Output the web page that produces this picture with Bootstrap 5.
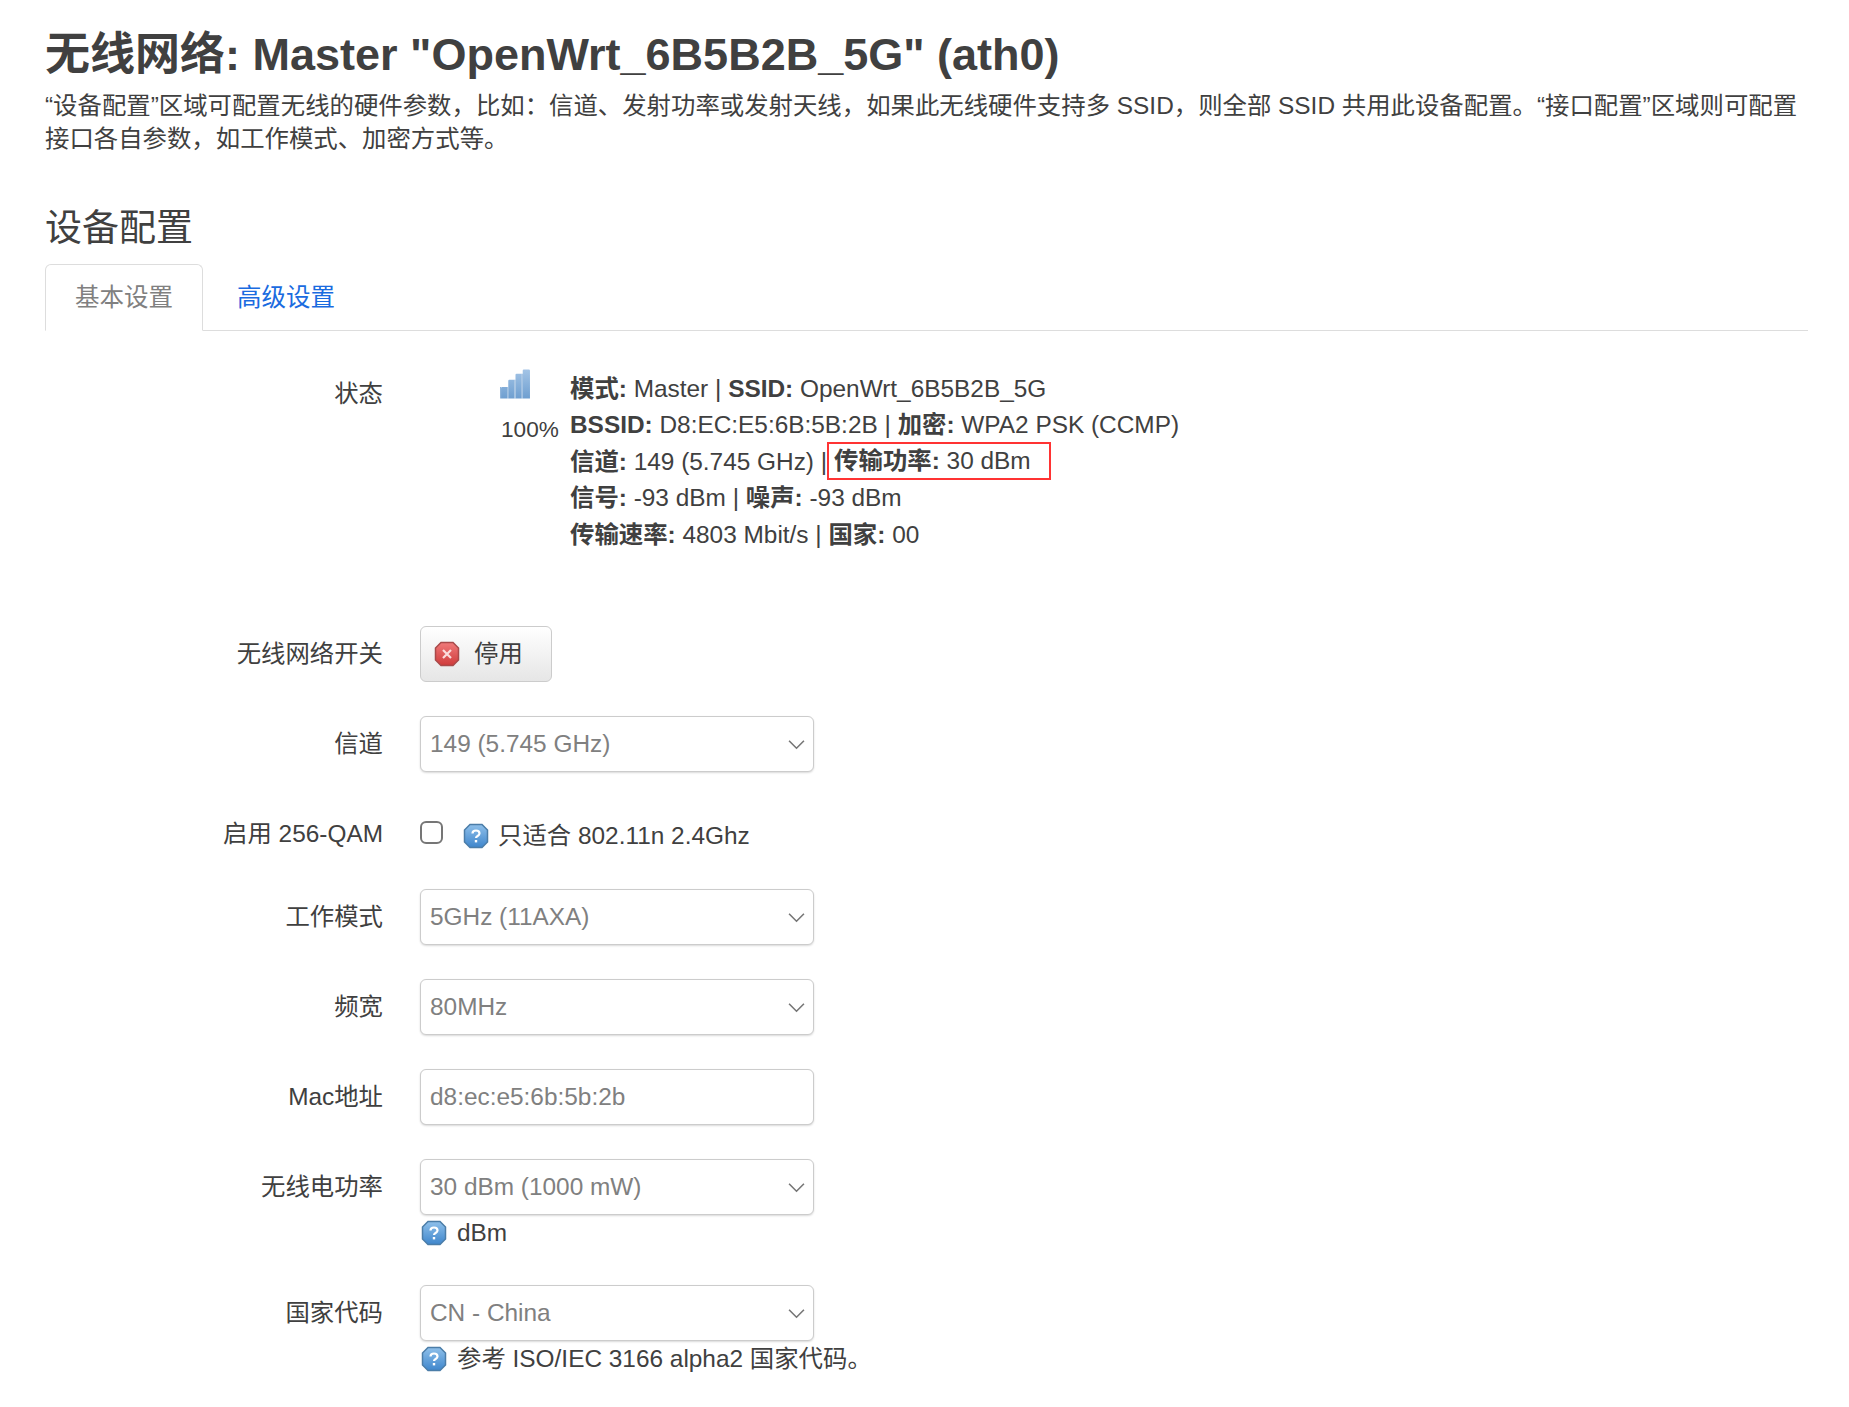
<!DOCTYPE html>
<html lang="zh-CN">
<head>
    <meta charset="UTF-8">
    <meta name="viewport" content="width=device-width, initial-scale=1.0">
    <title>无线网络</title>
    <link href="https://cdn.jsdelivr.net/npm/bootstrap@5.3.0/dist/css/bootstrap.min.css" rel="stylesheet">
    <style>
        body { font-family: "Liberation Sans", "Noto Sans CJK SC", sans-serif; font-size: 24.4px; line-height: 36px; color: #404040; background: #fff; }
        .page-wrap { padding: 27px 41px 0 45px; }
        .page-title { font-size: 45px; line-height: 56px; font-weight: 700; margin: 0 0 6px; color: #404040; }
        .page-desc { font-size: 24.4px; line-height: 33px; margin: 0 0 49px; }
        .sect-title { font-size: 37px; line-height: 50px; font-weight: 400; margin: 0 0 10px; color: #404040; }
        .tab-bar { border-bottom: 1px solid #ddd; height: 67px; }
        .tab-bar .nav-link { font-size: 24.5px; line-height: 36px; padding: 16px 29px 14px 34px; height: 67px; color: #1a6be0; border: 0; background: none; }
        .tab-bar .nav-link.active { color: #808080; border: 1px solid #ddd; border-bottom-color: #fff; border-radius: 6px 6px 0 0; padding: 15px 29px 15px; }
        .opt-label { width: 338px; flex: none; text-align: right; margin-right: 37px; }
        .opt-label-sel { padding-top: 10px; }
        .opt-row { min-height: 56px; margin-bottom: 34px; }
        .opt-row-tight { margin-bottom: 27px; }
        .status-row { padding-top: 40px; margin-bottom: 73px; line-height: 36.4px; }
        .status-row .opt-label { padding-top: 5px; }
        .status-icon { width: 59px; margin: 0 10px 0 81px; flex: none; }
        .status-icon svg { display: block; margin: -2px 0 13px -1px; }
        .signal-pct { font-size: 22.6px; }
        .hl-box { display: inline-block; border: 2px solid #f33; padding: 0 18px 0 5px; margin: -2px 0; line-height: 34px; vertical-align: top; }
        .opt-field { width: 394px; height: 56px; font-size: 24.4px; line-height: 34px; color: #808080; border-color: #ccc; border-radius: 6px; padding: 10px 40px 10px 9px; box-shadow: 0 1px 2px rgba(0,0,0,.15); }
        select.opt-field { background-image: url("data:image/svg+xml,%3csvg xmlns='http://www.w3.org/2000/svg' viewBox='0 0 16 16'%3e%3cpath fill='none' stroke='%23777' stroke-width='1.500' d='M1 4.500l7 7 7-7'/%3e%3c/svg%3e"); background-position: right 8px center; background-size: 17px 17px; }
        .off-btn { height: 56px; width: 132px; font-size: 24.4px; color: #404040; border: 1px solid #ccc; border-radius: 6px; padding: 0 0 0 13px; background: linear-gradient(#fff, #e6e6e6); display: flex; align-items: center; gap: 14px; }
        .chk-box { width: 23px; height: 23px; margin: -4px 20px 0 0; border: 2px solid #767676; border-radius: 4px; flex: none; }
        .qam-note { margin-top: 3px; }
        .qam-ico { margin-right: 9px; }
        .help-line { height: 36px; gap: 10px; padding-left: 1px; }
        .help-ico { flex: none; }
    </style>
</head>
<body>

<svg width="0" height="0" class="position-absolute">
    <defs>
        <linearGradient id="blueFill" x1="0" y1="0" x2="0" y2="1">
            <stop offset="0" stop-color="#8fc0ea"/>
            <stop offset="1" stop-color="#3f86cc"/>
        </linearGradient>
        <linearGradient id="redFill" x1="0" y1="0" x2="0" y2="1">
            <stop offset="0" stop-color="#f07a7a"/>
            <stop offset="1" stop-color="#cf3b3b"/>
        </linearGradient>
        <linearGradient id="barFill" x1="0" y1="0" x2="0" y2="1">
            <stop offset="0" stop-color="#a3c4e6"/>
            <stop offset="1" stop-color="#6f9fd0"/>
        </linearGradient>
        <symbol id="icoHelp" viewBox="0 0 26 26">
            <path d="M7 1.500h12l5.500 5.500v12l-5.500 5.500h-12l-5.500-5.500v-12z" fill="url(#blueFill)" stroke="#4b7da8" stroke-width="1.500"/>
            <path d="M9.500 10.500c0-2 1.500-3 3.500-3s3.500 1 3.500 3c0 2.500-3.500 2.500-3.500 4.500" fill="none" stroke="#fff" stroke-width="2.200"/>
            <path d="M11.800 17h2.400v2.400h-2.400z" fill="#fff"/>
        </symbol>
        <symbol id="icoStop" viewBox="0 0 26 26">
            <path d="M7 1.500h12l5.500 5.500v12l-5.500 5.500h-12l-5.500-5.500v-12z" fill="url(#redFill)" stroke="#a94a4a" stroke-width="1.500"/>
            <path d="M9 9l8 8M17 9l-8 8" stroke="#fbdcdc" stroke-width="2.200"/>
        </symbol>
    </defs>
</svg>

<div class="page-wrap">
    <h1 class="page-title">无线网络: Master "OpenWrt_6B5B2B_5G" (ath0)</h1>
    <p class="page-desc">“设备配置”区域可配置无线的硬件参数，比如：信道、发射功率或发射天线，如果此无线硬件支持多 SSID，则全部 SSID 共用此设备配置。“接口配置”区域则可配置接口各自参数，如工作模式、加密方式等。</p>

    <h2 class="sect-title">设备配置</h2>
    <ul class="nav tab-bar">
        <li class="nav-item"><a class="nav-link active" href="#">基本设置</a></li>
        <li class="nav-item"><a class="nav-link" href="#">高级设置</a></li>
    </ul>

    <div class="d-flex status-row">
        <div class="opt-label">状态</div>
        <div class="status-icon">
            <svg width="31" height="30" viewBox="0 0 30 28">
                <path d="M1 18q0-1 1-1h5v11h-6zM8 11q0-1 1-1h5v18h-6zM15 5q0-1 1-1h5v24h-6zM22 1q0-1 1-1h5q1 0 1 1v27h-7z" fill="url(#barFill)"/>
                <path d="M0 17h1v11h-1zM7 17h1v11h-1zM14 10h1v18h-1zM21 4h1v24h-1z" fill="#8fb4da"/>
            </svg>
            <div class="signal-pct">100%</div>
        </div>
        <div>
            <div><b>模式:</b> Master | <b>SSID:</b> OpenWrt_6B5B2B_5G</div>
            <div><b>BSSID:</b> D8:EC:E5:6B:5B:2B | <b>加密:</b> WPA2 PSK (CCMP)</div>
            <div><b>信道:</b> 149 (5.745 GHz) |<span class="hl-box"><b>传输功率:</b> 30 dBm</span></div>
            <div><b>信号:</b> -93 dBm | <b>噪声:</b> -93 dBm</div>
            <div><b>传输速率:</b> 4803 Mbit/s | <b>国家:</b> 00</div>
        </div>
    </div>

    <div class="d-flex align-items-center opt-row">
        <div class="opt-label">无线网络开关</div>
        <button type="button" class="btn off-btn">
            <svg width="26" height="26" class="help-ico"><use href="#icoStop"/></svg>
            <span>停用</span>
        </button>
    </div>

    <div class="d-flex align-items-center opt-row">
        <div class="opt-label">信道</div>
        <select class="form-select opt-field"><option>149 (5.745 GHz)</option></select>
    </div>

    <div class="d-flex align-items-center opt-row opt-row-tight">
        <div class="opt-label">启用 256-QAM</div>
        <input type="checkbox" class="form-check-input chk-box">
        <svg width="26" height="26" class="help-ico qam-ico qam-note"><use href="#icoHelp"/></svg>
        <span class="qam-note">只适合 802.11n 2.4Ghz</span>
    </div>

    <div class="d-flex align-items-center opt-row">
        <div class="opt-label">工作模式</div>
        <select class="form-select opt-field"><option>5GHz (11AXA)</option></select>
    </div>

    <div class="d-flex align-items-center opt-row">
        <div class="opt-label">频宽</div>
        <select class="form-select opt-field"><option>80MHz</option></select>
    </div>

    <div class="d-flex align-items-center opt-row">
        <div class="opt-label">Mac地址</div>
        <input type="text" class="form-control opt-field" value="d8:ec:e5:6b:5b:2b">
    </div>

    <div class="d-flex opt-row">
        <div class="opt-label opt-label-sel">无线电功率</div>
        <div>
            <select class="form-select opt-field"><option>30 dBm (1000 mW)</option></select>
            <div class="d-flex align-items-center help-line">
                <svg width="26" height="26" class="help-ico"><use href="#icoHelp"/></svg>
                <span>dBm</span>
            </div>
        </div>
    </div>

    <div class="d-flex opt-row">
        <div class="opt-label opt-label-sel">国家代码</div>
        <div>
            <select class="form-select opt-field"><option>CN - China</option></select>
            <div class="d-flex align-items-center help-line">
                <svg width="26" height="26" class="help-ico"><use href="#icoHelp"/></svg>
                <span>参考 ISO/IEC 3166 alpha2 国家代码。</span>
            </div>
        </div>
    </div>
</div>

<script src="https://cdn.jsdelivr.net/npm/bootstrap@5.3.0/dist/js/bootstrap.bundle.min.js"></script>
</body>
</html>
